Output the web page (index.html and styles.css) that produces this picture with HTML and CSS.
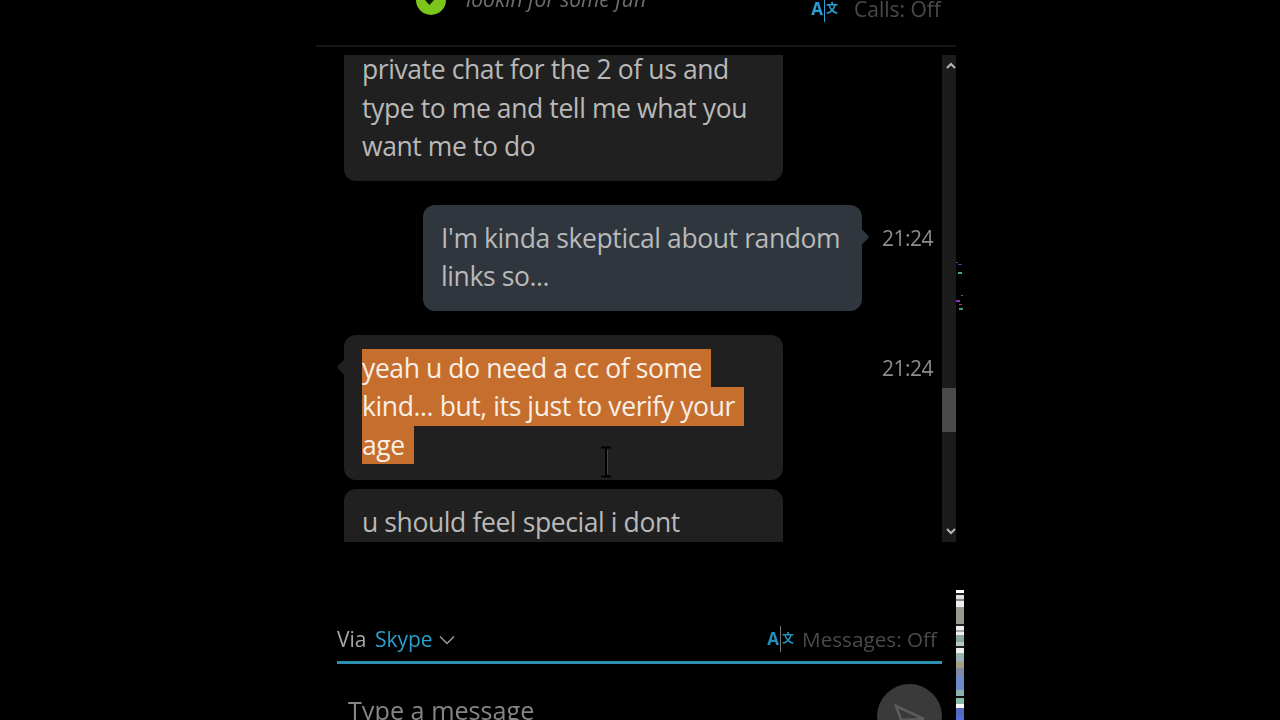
FILE: index.html
```html
<!DOCTYPE html>
<html lang="en">
<head>
    <meta charset="UTF-8">
    <meta name="viewport" content="width=device-width, initial-scale=1.0">
    <title>Skype chat</title>
    <link rel="stylesheet" href="styles.css">
</head>
<body>

    <div class="frame">
        <!-- top bar, cut off by the video edge -->
        <header class="top-bar">
            <div class="status">
                <span class="status-dot">
                    <svg viewBox="0 0 30 30" width="30" height="30"><path d="M8 11l5.500 6 9-10" fill="none" stroke="#0b1a00" stroke-width="4"/></svg>
                </span>
                <span class="mood">lookin for some fun</span>
            </div>
            <div class="calls">
                <span class="translate"><b>A</b><i class="bar"></i><span class="wen">文</span></span>
                <span class="off-label">Calls: Off</span>
            </div>
        </header>

        <div class="chat">
            <div class="messages">
                <div class="row first">
                    <div class="bubble in">private chat for the 2 of us and type to me and tell me what you want me to do</div>
                </div>
                <div class="row">
                    <div class="bubble out tail-right">I'm kinda skeptical about random links so...</div>
                    <span class="time">21:24</span>
                </div>
                <div class="row">
                    <div class="bubble in tail-left">
                        <span class="sel">yeah u do need a cc of some</span>
                        <span class="sel">kind... but, its just to verify your</span>
                        <span class="sel">age</span>
                    </div>
                    <span class="time">21:24</span>
                </div>
                <div class="row tight">
                    <div class="bubble in">u should feel special i dont</div>
                </div>
            </div>
            <div class="scrollbar">
                <svg class="arrow" viewBox="0 0 14 10" width="14" height="10"><path d="M3 7l4-4 4 4" fill="none" stroke="#b5b5b5" stroke-width="2"/></svg>
                <div class="thumb"></div>
                <svg class="arrow down" viewBox="0 0 14 10" width="14" height="10"><path d="M3 3l4 4 4-4" fill="none" stroke="#b5b5b5" stroke-width="2"/></svg>
            </div>
            <!-- mouse pointer from the recording -->
            <svg class="ibeam" viewBox="0 0 14 32" width="14" height="32"><path d="M2 1.500h10M7 1.500v29M2 30.500h10" fill="none" stroke="#000" stroke-width="2"/><path d="M8.500 4v24" stroke="#444" stroke-width="1"/></svg>
        </div>

        <div class="toolbar">
            <div class="via">Via <span class="skype">Skype</span>
                <svg viewBox="0 0 18 10" width="18" height="10"><path d="M2 1.500l7 7 7-7" fill="none" stroke="#9a9a9a" stroke-width="1.500"/></svg>
            </div>
            <div class="messages-toggle">
                <span class="translate small"><b>A</b><i class="bar"></i><span class="wen">文</span></span>
                <span class="off-label">Messages: Off</span>
            </div>
        </div>

        <div class="composer">
            <div class="placeholder">Type a message</div>
            <div class="send">
                <svg viewBox="0 0 34 24" width="34" height="24"><path d="M3 2l28 13-23 1z" fill="none" stroke="#5c5c5c" stroke-width="2.500"/></svg>
            </div>
        </div>

        <!-- compression junk on the right edge of the video -->
        <svg class="specks" viewBox="0 0 8 50" width="8" height="50">
            <rect x="0" y="0" width="2" height="1" fill="#7a2fb0"/>
            <rect x="2" y="2" width="4" height="1" fill="#4a3fa0"/>
            <rect x="2" y="10" width="4" height="2" fill="#4fae78"/>
            <rect x="5" y="33" width="2" height="1" fill="#665"/>
            <rect x="0" y="38" width="4" height="2" fill="#8a2fb0"/>
            <rect x="3" y="42" width="3" height="1" fill="#a5552f"/>
            <rect x="3" y="46" width="4" height="2" fill="#3fa27a"/>
        </svg>
        <div class="noise"></div>
    </div>

</body>
</html>
```
FILE: styles.css
```css
body {
    margin: 0;
    background-color: #000;
    font-family: "Open Sans", "Noto Sans CJK SC", sans-serif;
    height: 720px;
    overflow: hidden;
}

.frame {
    position: relative;
    width: 640px;
    height: 720px;
    margin-left: 316px;
    filter: blur(0.5px);
}

/* top bar */
.top-bar {
    height: 45px;
    border-bottom: 2px solid #161616;
    overflow: hidden;
    display: flex;
    justify-content: space-between;
    align-items: flex-start;
}

.status {
    display: flex;
    align-items: flex-start;
    margin-left: 100px;
    margin-top: -15px;
}

.status-dot {
    width: 30px;
    height: 30px;
    border-radius: 50%;
    background-color: #7cc61c;
}

.mood {
    margin-left: 20px;
    font-size: 21px;
    line-height: 28px;
    font-style: italic;
    color: #6e6e6e;
}

.calls {
    display: flex;
    align-items: center;
    margin-right: 15px;
    margin-top: -4px;
}

.translate {
    display: inline-flex;
    align-items: center;
    color: #2a9fd6;
    font-size: 17px;
    line-height: 26px;
}

.translate b {
    font-weight: 700;
}

.translate .bar {
    width: 1px;
    height: 26px;
    margin: 0 1px;
    background-color: #2a9fd6;
}

.translate .wen {
    font-size: 12px;
    font-weight: 700;
}

.off-label {
    color: #4a4a4a;
    font-size: 21px;
    line-height: 26px;
    margin-left: 16px;
}

/* chat area */
.chat {
    position: relative;
    display: flex;
    height: 487px;
    margin-top: 8px;
}

.messages {
    width: 626px;
    overflow: hidden;
}

.row {
    display: grid;
    grid-template-columns: 566px 60px;
    align-items: start;
    margin-top: 24px;
}

.row.first {
    margin-top: -19px;
}

.row.tight {
    margin-top: 9px;
}

.bubble {
    position: relative;
    box-sizing: border-box;
    width: 439px;
    padding: 14px 18px 15px;
    font-size: 26.500px;
    letter-spacing: -0.400px;
    line-height: 38.500px;
    color: #b9b9b9;
    border-radius: 12px;
}

.bubble.in {
    margin-left: 28px;
    background-color: #202020;
}

.bubble.out {
    justify-self: end;
    margin-right: 20px;
    background-color: #30363e;
}

.bubble.tail-left {
    padding-bottom: 16px;
}

.tail-left::before,
.tail-right::after {
    content: "";
    position: absolute;
    top: 26px;
    width: 12px;
    height: 12px;
    background-color: inherit;
    transform: rotate(45deg);
    border-radius: 2px;
}

.tail-left::before {
    left: -5px;
}

.tail-right::after {
    right: -5px;
}

.sel {
    display: block;
    width: fit-content;
    padding-right: 9px;
    background-color: #c66e2e;
    color: #f8efe6;
}

.time {
    font-size: 21px;
    letter-spacing: -0.500px;
    line-height: 38.500px;
    margin-top: 14px;
    color: #8c8c8c;
}

.scrollbar {
    width: 14px;
    background-color: #1b1b1b;
    display: flex;
    flex-direction: column;
}

.arrow {
    margin-top: 6px;
    margin-left: 2px;
}

.thumb {
    height: 44px;
    margin-top: 317px;
    background-color: #4a4a4a;
}

.arrow.down {
    margin-top: auto;
    margin-bottom: 6px;
}

.ibeam {
    position: absolute;
    left: 283px;
    top: 391px;
}

/* message box */
.toolbar {
    display: flex;
    justify-content: space-between;
    align-items: flex-start;
    height: 36px;
    margin: 83px 14px 0 21px;
    border-bottom: 3px solid #2f8fb0;
}

.via {
    font-size: 21px;
    line-height: 28px;
    color: #a8a8a8;
}

.via svg {
    vertical-align: 2px;
}

.skype {
    margin-left: 3px;
    color: #2a9fc9;
}

.messages-toggle {
    display: flex;
    align-items: center;
    margin-right: 5px;
}

.translate.small {
    font-size: 17px;
    color: #2090b8;
}

.translate.small .bar {
    background-color: #777;
}

.messages-toggle .off-label {
    margin-left: 8px;
    font-size: 20.700px;
    line-height: 28px;
}

.composer {
    display: flex;
    justify-content: space-between;
    margin: 20px 14px 0 32px;
}

.placeholder {
    font-size: 25.200px;
    line-height: 52px;
    color: #858585;
}

.send {
    width: 65px;
    height: 65px;
    border-radius: 50%;
    background-color: #3a3a3a;
    display: flex;
    justify-content: center;
}

.send svg {
    margin-top: 20px;
}

.specks {
    position: absolute;
    left: 640px;
    top: 262px;
}

.noise {
    position: absolute;
    left: 640px;
    top: 590px;
    width: 8px;
    height: 130px;
    background-image: linear-gradient(to bottom,
        #fff 0 3px, #222 3px 5px, #ddd 5px 9px, #888 9px 11px, #eee 11px 17px, #9c9890 17px 34px,
        #222 34px 36px, #eee 36px 40px, #aaa 40px 42px, #eee 42px 45px, #8fa5a5 45px 52px, #b5c5c5 52px 56px,
        #222 56px 58px, #eee 58px 63px, #9cb0b0 63px 72px, #a5a078 72px 78px, #8088a8 78px 86px, #7088c8 86px 100px,
        #8ab0b0 100px 106px, #111 106px 108px, #88b8b0 108px 114px, #fff 114px 118px, #5568c0 118px 126px, #5070d8 126px 130px);
}
```
